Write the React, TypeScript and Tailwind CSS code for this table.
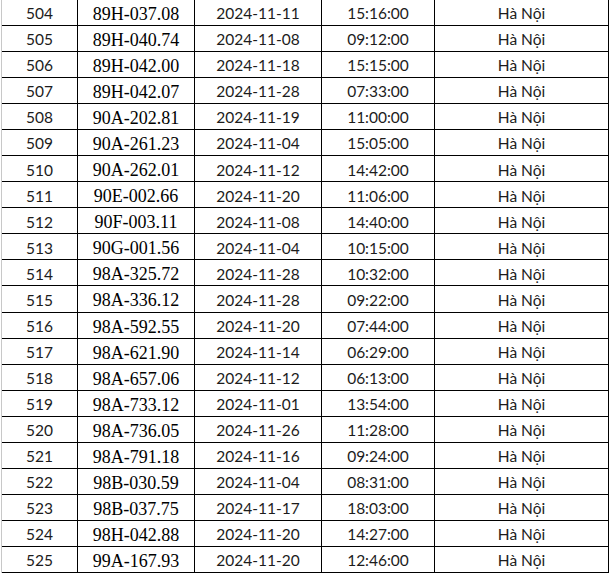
import React from 'react';

type Row = [string, string, string, string];

const rows: Row[] = [
  ['504', '89H-037.08', '2024-11-11', '15:16:00'],
  ['505', '89H-040.74', '2024-11-08', '09:12:00'],
  ['506', '89H-042.00', '2024-11-18', '15:15:00'],
  ['507', '89H-042.07', '2024-11-28', '07:33:00'],
  ['508', '90A-202.81', '2024-11-19', '11:00:00'],
  ['509', '90A-261.23', '2024-11-04', '15:05:00'],
  ['510', '90A-262.01', '2024-11-12', '14:42:00'],
  ['511', '90E-002.66', '2024-11-20', '11:06:00'],
  ['512', '90F-003.11', '2024-11-08', '14:40:00'],
  ['513', '90G-001.56', '2024-11-04', '10:15:00'],
  ['514', '98A-325.72', '2024-11-28', '10:32:00'],
  ['515', '98A-336.12', '2024-11-28', '09:22:00'],
  ['516', '98A-592.55', '2024-11-20', '07:44:00'],
  ['517', '98A-621.90', '2024-11-14', '06:29:00'],
  ['518', '98A-657.06', '2024-11-12', '06:13:00'],
  ['519', '98A-733.12', '2024-11-01', '13:54:00'],
  ['520', '98A-736.05', '2024-11-26', '11:28:00'],
  ['521', '98A-791.18', '2024-11-16', '09:24:00'],
  ['522', '98B-030.59', '2024-11-04', '08:31:00'],
  ['523', '98B-037.75', '2024-11-17', '18:03:00'],
  ['524', '98H-042.88', '2024-11-20', '14:27:00'],
  ['525', '99A-167.93', '2024-11-20', '12:46:00'],
];

const sans = "font-['Lato','Noto_Sans',sans-serif] text-[15.5px] text-[#1c1c1c]";
const serif = "font-['Liberation_Serif','Times_New_Roman',serif] text-[18px] text-black";
const cell = 'flex items-center justify-center border-r border-black pt-[3px] leading-none';

export default function App() {
  return (
    <div className="w-[611px] h-[573px] bg-white overflow-hidden">
      <div className="ml-[1px] w-[608px] border-l border-[#c8c8c8]">
        {rows.map(([no, plate, date, time], i) => (
          <div
            key={no}
            className={`grid grid-cols-[76px_117px_127px_113px_174px] border-b border-black ${i === 0 ? 'h-[26px]' : 'h-[26.05px]'}`}
          >
            <div className={`${cell} ${sans}`}>{no}</div>
            <div className={`${cell} ${serif}`}>{plate}</div>
            <div className={`${cell} ${sans}`}>{date}</div>
            <div className={`${cell} ${sans}`}>{time}</div>
            <div className={`${cell} ${sans}`}>Hà Nội</div>
          </div>
        ))}
      </div>
    </div>
  );
}
